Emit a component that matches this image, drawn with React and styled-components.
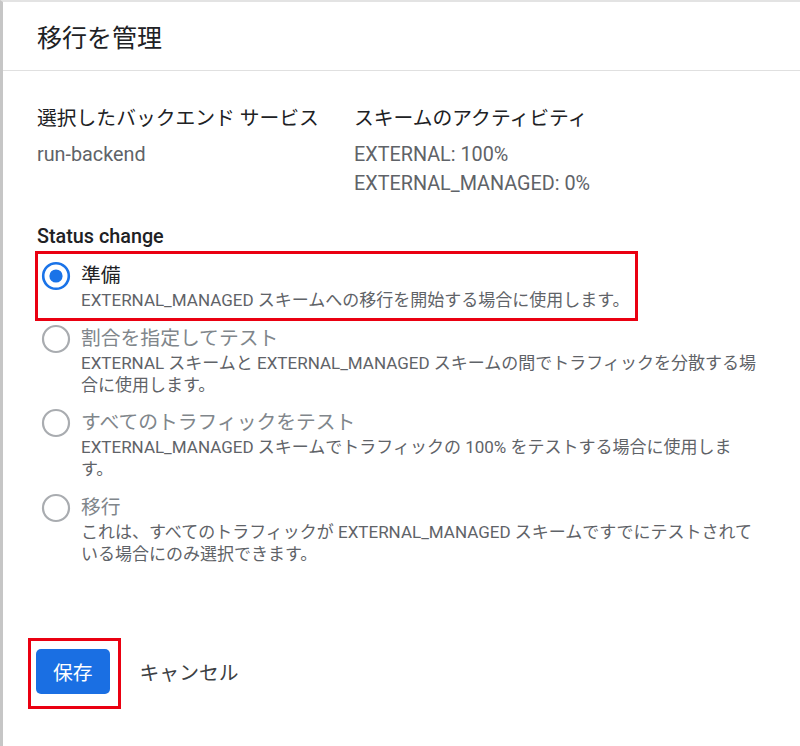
import React, { useState } from 'react'
import styled, { createGlobalStyle, css } from 'styled-components'

const GlobalStyle = createGlobalStyle`
body {
  margin: 0;
  background: #fff;
  font-family: Roboto, "Noto Sans CJK JP", sans-serif;
}
`

const Dialog = styled.div`
min-height: 100vh;
box-sizing: border-box;
border-left: 3px solid #c6c6c6;
border-top: 2px solid #e3e3e3;
background: #fff;
`

const Header = styled.div`
height: 68px;
display: flex;
align-items: center;
padding-left: 34px;
border-bottom: 1px solid #e0e0e0;
`

const Title = styled.h1`
margin: 0;
font-size: 25px;
font-weight: 400;
color: #202124;
`

const Body = styled.div`
padding: 35px 30px 0 34px;
`

const InfoRow = styled.div`
display: flex;
`

const InfoColumn = styled.div`
width: ${p => p.$width || 'auto'};
`

const InfoLabel = styled.div`
font-size: 19.8px;
line-height: 26px;
color: #202124;
`

const InfoValues = styled.div`
margin-top: 7.5px;
`

const InfoValue = styled.div`
font-size: 19.8px;
line-height: 29px;
color: #5f6368;
`

const Legend = styled.div`
margin-top: 26px;
font-size: 19.8px;
line-height: 26px;
font-weight: 500;
color: #202124;
`

const Options = styled.div`
margin-top: 13.5px;
padding-left: 4px;
display: flex;
flex-direction: column;
gap: 14.5px;
`

const Option = styled.label`
position: relative;
display: flex;
gap: 10px;
cursor: ${p => (p.$disabled ? 'default' : 'pointer')};
`

const RadioBox = styled.span`
flex: none;
height: 26px;
display: flex;
align-items: center;
`

const OptionText = styled.div`
flex: 1;
`

const OptionLabel = styled.div`
font-size: 19.8px;
line-height: 26px;
color: ${p => (p.$disabled ? '#80868b' : '#202124')};
`

const OptionDesc = styled.div`
font-size: 17px;
line-height: 22px;
color: #5f6368;
white-space: pre-line;
`

const Highlight = styled.span`
position: absolute;
box-sizing: border-box;
border: 3px solid #ea0011;
pointer-events: none;
${p => css`
  top: ${p.$top}px;
  left: ${p.$left}px;
  width: ${p.$w}px;
  height: ${p.$h}px;
`}
`

const Actions = styled.div`
margin-top: 84px;
margin-left: -1px;
display: flex;
align-items: center;
gap: 30px;
`

const ButtonWrap = styled.span`
position: relative;
display: inline-flex;
`

const PrimaryButton = styled.button`
height: 45px;
padding: 0 17px;
border: none;
border-radius: 5px;
background: #1a6fe3;
color: #fff;
font-family: inherit;
font-size: 19.8px;
cursor: pointer;
`

const TextButton = styled.button`
padding: 0;
border: none;
background: none;
color: #3c4043;
font-family: inherit;
font-size: 19.8px;
cursor: pointer;
`

const Radio = ({ checked }) => (
  <svg width="30" height="30" viewBox="0 0 30 30">
    {checked ? (
      <>
        <circle cx="15" cy="15" r="12.8" fill="none" stroke="#1a73e8" strokeWidth="2.6" />
        <circle cx="15" cy="15" r="6.6" fill="#1a73e8" />
      </>
    ) : (
      <circle cx="15" cy="15" r="13" fill="none" stroke="#a9acb0" strokeWidth="2.2" />
    )}
  </svg>
)

const options = [
  {
    id: 'prepare',
    label: '準備',
    desc: 'EXTERNAL_MANAGED スキームへの移行を開始する場合に使用します。',
  },
  {
    id: 'percent',
    label: '割合を指定してテスト',
    desc: 'EXTERNAL スキームと EXTERNAL_MANAGED スキームの間でトラフィックを分散する場\n合に使用します。',
    disabled: true,
  },
  {
    id: 'all',
    label: 'すべてのトラフィックをテスト',
    desc: 'EXTERNAL_MANAGED スキームでトラフィックの 100% をテストする場合に使用しま\nす。',
    disabled: true,
  },
  {
    id: 'migrate',
    label: '移行',
    desc: 'これは、すべてのトラフィックが EXTERNAL_MANAGED スキームですでにテストされて\nいる場合にのみ選択できます。',
    disabled: true,
  },
]

export default function App() {
  const [status, setStatus] = useState('prepare')

  return (
    <Dialog>
      <GlobalStyle />
      <Header>
        <Title>移行を管理</Title>
      </Header>
      <Body>
        <InfoRow>
          <InfoColumn $width="317px">
            <InfoLabel>選択したバックエンド サービス</InfoLabel>
            <InfoValues>
              <InfoValue>run-backend</InfoValue>
            </InfoValues>
          </InfoColumn>
          <InfoColumn>
            <InfoLabel>スキームのアクティビティ</InfoLabel>
            <InfoValues>
              <InfoValue>EXTERNAL: 100%</InfoValue>
              <InfoValue>EXTERNAL_MANAGED: 0%</InfoValue>
            </InfoValues>
          </InfoColumn>
        </InfoRow>

        <Legend>Status change</Legend>
        <Options>
          {options.map(o => (
            <Option
              key={o.id}
              $disabled={o.disabled}
              onClick={() => !o.disabled && setStatus(o.id)}
            >
              <RadioBox>
                <Radio checked={status === o.id} />
              </RadioBox>
              <OptionText>
                <OptionLabel $disabled={o.disabled}>{o.label}</OptionLabel>
                <OptionDesc>{o.desc}</OptionDesc>
              </OptionText>
              {o.id === 'prepare' && <Highlight $top={-12} $left={-6} $w={603} $h={70} />}
            </Option>
          ))}
        </Options>

        <Actions>
          <ButtonWrap>
            <PrimaryButton>保存</PrimaryButton>
            <Highlight $top={-11} $left={-8} $w={93} $h={71} />
          </ButtonWrap>
          <TextButton>キャンセル</TextButton>
        </Actions>
      </Body>
    </Dialog>
  )
}
